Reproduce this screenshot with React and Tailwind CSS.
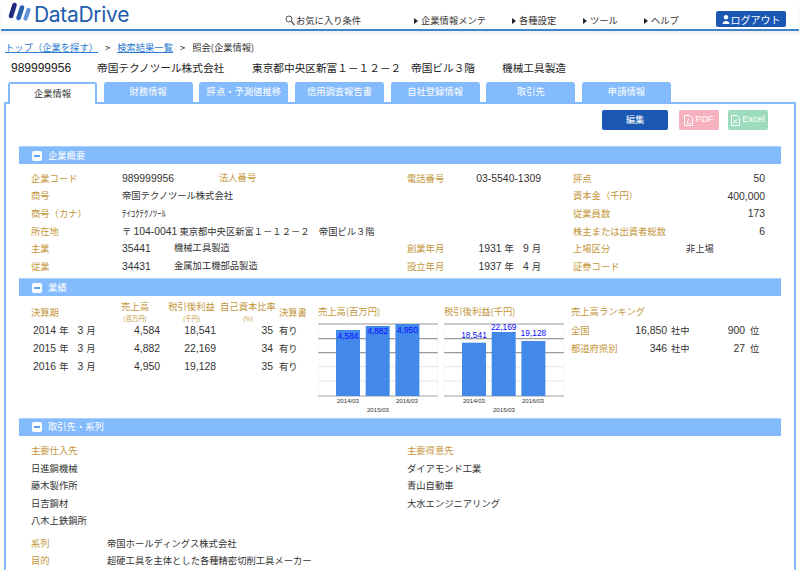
const jp = "font-['Noto_Sans_CJK_JP','Liberation_Sans',sans-serif]";

const tabs = ["企業情報", "財務情報", "評点・予測値推移", "信用調査報告書", "自社登録情報", "取引先", "申請情報"];

function Logo() {
  return (
    <div className="flex items-center h-[28px] pl-[7px]">
      <svg width="24" height="20" viewBox="0 0 24 20" className="mr-[2px] -mt-[5px]">
        <path d="M6.5 3 L3 14" stroke="#1f2a80" strokeWidth="4.6" strokeLinecap="round" />
        <path d="M14 5.5 L10.5 16" stroke="#2b5fb0" strokeWidth="4.6" strokeLinecap="round" />
        <path d="M20.5 8 L17.5 16.5" stroke="#5f94d8" strokeWidth="4.2" strokeLinecap="round" />
      </svg>
      <span className="font-['Inter',sans-serif] font-normal text-[#1d5bab] text-[21px] leading-none -tracking-[0.3px] mt-[1px]">DataDrive</span>
    </div>
  );
}

function NavItem({ label, w }) {
  return (
    <div className={`flex items-center text-[9.3px] text-[#333] ${w}`}>
      <span className="w-0 h-0 border-y-[3px] border-y-transparent border-l-[4px] border-l-[#222] mr-[3px]" />
      {label}
    </div>
  );
}

function Header() {
  return (
    <div className="relative h-[30.5px] mx-[1px] border-b-2 border-[#3d85cc] shadow-[0_3px_3px_#f0f0f0]">
      <Logo />
      <div className="absolute left-[284px] top-[14px] flex items-center text-[9.3px] text-[#333]">
        <svg width="10" height="11" viewBox="0 0 10 11" className="mr-[1px]">
          <circle cx="4" cy="4" r="3" fill="none" stroke="#555" strokeWidth="1" />
          <path d="M6.5 6.5 L9.5 10" stroke="#555" strokeWidth="1.3" />
        </svg>
        お気に入り条件
      </div>
      <div className="absolute left-[413px] top-[14px] flex">
        <NavItem label="企業情報メンテ" w="w-[98px]" />
        <NavItem label="各種設定" w="w-[71px]" />
        <NavItem label="ツール" w="w-[61px]" />
        <NavItem label="ヘルプ" w="w-[50px]" />
      </div>
      <div className="absolute left-[715px] top-[11px] w-[70px] h-[16px] rounded-[2px] bg-[#1a58b4] flex items-center justify-center text-white text-[10px]">
        <svg width="8" height="9" viewBox="0 0 8 9" className="mr-[1px]">
          <circle cx="4" cy="2.3" r="2.2" fill="#fff" />
          <path d="M0.5 9 C0.5 5 7.5 5 7.5 9 Z" fill="#fff" />
        </svg>
        ログアウト
      </div>
    </div>
  );
}

function Tabs() {
  return (
    <div className="flex gap-[6.67px] pl-[8px] h-[20px] relative z-10">
      {tabs.map((t, i) => (
        <div
          key={t}
          className={
            i === 0
              ? "w-[89px] h-[22px] rounded-t-[3px] border-2 border-b-0 border-[#84bbfd] bg-white text-[#333] text-[9.3px] flex items-center justify-center"
              : "w-[89px] h-[20px] rounded-t-[3px] bg-[#84bbfd] text-white text-[9.3px] flex items-center justify-center"
          }
        >
          {t}
        </div>
      ))}
    </div>
  );
}

function SectionBar({ title }) {
  return (
    <div className="h-[18px] bg-[#84bbfd] border-t border-[#a8d0fe] flex items-center pl-[13px] text-white text-[9.3px]">
      <span className="w-[10px] h-[10px] rounded-[2px] bg-white flex items-center justify-center mr-[6px]">
        <span className="w-[6px] h-[2px] bg-[#5d9ff0]" />
      </span>
      {title}
    </div>
  );
}

const L = ({ children, className = "" }) => <span className={`text-[#c3963a] ${className}`}>{children}</span>;
const N = ({ children, className = "" }) => <span className={`font-['Liberation_Sans',sans-serif] text-[10.4px] ${className}`}>{children}</span>;

function YearMonth({ y, m }) {
  return (
    <>
      <N>{y}</N>
      <span className="ml-[3px]">年</span>
      <N className="ml-[9px]">{m}</N>
      <span className="ml-[3px]">月</span>
    </>
  );
}

function Overview() {
  const rows = [
    ["企業コード", <div className="flex"><N className="w-[97px]">989999956</N><L>法人番号</L></div>, "電話番号", <N>03-5540-1309</N>, "評点", <N>50</N>],
    ["商号", "帝国テクノツール株式会社", null, null, "資本金（千円）", <N>400,000</N>],
    ["商号（カナ）", <span className="text-[8.8px]">ﾃｲｺｸﾃｸﾉﾂｰﾙ</span>, null, null, "従業員数", <N>173</N>],
    ["所在地", <>〒 <N>104-0041</N> 東京都中央区新富１－１２－２　帝国ビル３階</>, null, null, "株主または出資者総数", <N>6</N>],
    ["主業", <div className="flex"><N className="w-[52px]">35441</N>機械工具製造</div>, "創業年月", <YearMonth y="1931" m="9" />, "上場区分", <div className="text-left pl-[10px]">非上場</div>],
    ["従業", <div className="flex"><N className="w-[52px]">34431</N>金属加工機部品製造</div>, "設立年月", <YearMonth y="1937" m="4" />, "証券コード", ""],
  ];
  return (
    <div className="pl-[12px] pt-[6px] h-[114px]">
      {rows.map((r, i) => (
        <div key={i} className="h-[17.6px] grid grid-cols-[91px_285px_50px_116px_103px_1fr] items-center pr-[16px] text-[9.3px] text-[#333]">
          <L>{r[0]}</L>
          <div className="whitespace-nowrap">{r[1]}</div>
          <L>{r[2]}</L>
          <div className="w-[84px] text-right whitespace-nowrap">{r[3]}</div>
          <L className="whitespace-nowrap">{r[4]}</L>
          <div className="text-right">{r[5]}</div>
        </div>
      ))}
    </div>
  );
}

function Chart({ title, tops, labelY, values, w }) {
  return (
    <div className={w}>
      <div className="h-[18px] text-[#c3963a] leading-[18px]">{title}</div>
      <svg width="120" height="91" viewBox="0 -1 120 91" className="mt-[3px] font-['Liberation_Sans',sans-serif]">
        {[0, 14.7, 28.7, 42.7, 57].map((y, i) => (
          <line key={y} x1="0" x2="120" y1={y} y2={y} stroke={i < 3 ? "#999" : "#ddd"} strokeWidth={i < 3 ? 1.2 : 0.8} />
        ))}
        {[0, 30, 60, 90, 120].map((x) => (
          <line key={x} x1={x} x2={x} y1="0" y2="72" stroke="#e8e8e8" strokeWidth="0.6" />
        ))}
        <line x1="0" x2="120" y1="72" y2="72" stroke="#888" strokeWidth="0.8" />
        {tops.map((t, i) => (
          <g key={i}>
            <rect x={18 + i * 29.7} y={t} width="24" height={72 - t} fill="#4289ea" />
            <text x={30 + i * 29.7} y={labelY[i]} textAnchor="middle" fontSize="8.4" fill="#0a0aff">{values[i]}</text>
          </g>
        ))}
        <text x="30" y="78.5" textAnchor="middle" fontSize="6.1" fill="#333">2014/03</text>
        <text x="89" y="78.5" textAnchor="middle" fontSize="6.1" fill="#333">2016/03</text>
        <text x="60" y="87.5" textAnchor="middle" fontSize="6.1" fill="#333">2015/03</text>
      </svg>
    </div>
  );
}

function HeadCell({ className, label, unit }) {
  return (
    <div className={className}>
      <div className="leading-[13.5px]">{label}</div>
      <div className="text-[6.4px] leading-[9px]">{unit}</div>
    </div>
  );
}

function Results() {
  const rows = [
    ["2014", "4,584", "18,541", "35"],
    ["2015", "4,882", "22,169", "34"],
    ["2016", "4,950", "19,128", "35"],
  ];
  return (
    <div className="flex h-[121.5px] pl-[12px] pt-[6px] text-[9.3px] text-[#333]">
      <div className="w-[287px] shrink-0">
        <div className="grid grid-cols-[70px_59px_56px_57px_1fr] h-[22px] -mt-[2px] items-start text-[#c3963a] text-center leading-[10px] whitespace-nowrap">
          <div className="text-left pt-[7px]">決算期</div>
          <HeadCell className="ml-[20px] w-[28px]" label="売上高" unit="(百万円)" />
          <HeadCell className="ml-[8px] w-[47px]" label="税引後利益" unit="(千円)" />
          <HeadCell className="ml-[4px] w-[56px]" label="自己資本比率" unit="(%)" />
          <div className="text-left pt-[7px] pl-[6px]">決算書</div>
        </div>
        {rows.map((r) => (
          <div key={r[0]} className="grid grid-cols-[70px_59px_56px_57px_1fr] h-[18px] items-center">
            <div className="pl-[2px] whitespace-nowrap"><YearMonth y={r[0]} m="3" /></div>
            <div className="text-right"><N>{r[1]}</N></div>
            <div className="text-right"><N>{r[2]}</N></div>
            <div className="text-right"><N>{r[3]}</N></div>
            <div className="pl-[6px]">有り</div>
          </div>
        ))}
      </div>
      <Chart w="w-[126px] shrink-0" title="売上高(百万円)" tops={[6, 2, 0]} labelY={[14.7, 10, 8.7]} values={["4,584", "4,882", "4,950"]} />
      <Chart w="w-[127px] shrink-0" title="税引後利益(千円)" tops={[18.7, 8, 17]} labelY={[13.7, 5.7, 12]} values={["18,541", "22,169", "19,128"]} />
      <div className="flex-1">
        <div className="text-[#c3963a] h-[18px] leading-[18px]">売上高ランキング</div>
        <div className="grid grid-cols-[45px_51px_23px_55px_1fr] mt-[1.5px] h-[18px] items-center">
          <L>全国</L><div className="text-right"><N>16,850</N></div><div className="pl-[4px]">社中</div><div className="text-right"><N>900</N></div><div className="pl-[5px]">位</div>
        </div>
        <div className="grid grid-cols-[45px_51px_23px_55px_1fr] h-[18px] items-center">
          <L className="whitespace-nowrap">都道府県別</L><div className="text-right"><N>346</N></div><div className="pl-[4px]">社中</div><div className="text-right"><N>27</N></div><div className="pl-[5px]">位</div>
        </div>
      </div>
    </div>
  );
}

function Partners() {
  const left = ["日進鋼機械", "藤木製作所", "日吉鋼材", "八木上鉄鋼所"];
  const right = ["ダイアモンド工業", "青山自動車", "大水エンジニアリング"];
  return (
    <div className="pl-[12px] pt-[7px] text-[9.3px] text-[#333]">
      <div className="grid grid-cols-[376px_1fr]">
        <div>
          <div className="h-[17.5px] flex items-center"><L>主要仕入先</L></div>
          {left.map((x) => <div key={x} className="h-[17.5px] flex items-center">{x}</div>)}
        </div>
        <div>
          <div className="h-[17.5px] flex items-center"><L>主要得意先</L></div>
          {right.map((x) => <div key={x} className="h-[17.5px] flex items-center">{x}</div>)}
        </div>
      </div>
      <div className="mt-[5px] h-[17.5px] flex items-center"><L className="w-[76px]">系列</L>帝国ホールディングス株式会社</div>
      <div className="h-[17.5px] flex items-center"><L className="w-[76px]">目的</L>超硬工具を主体とした各種精密切削工具メーカー</div>
    </div>
  );
}

function FileIcon({ mark }) {
  return (
    <svg width="9" height="11" viewBox="0 0 9 11" className="mr-[2px]">
      <path d="M0.5 0.5 H6 L8.5 3 V10.5 H0.5 Z" fill="none" stroke="#fff" strokeWidth="1" />
      {mark === "x" ? (
        <path d="M2.5 4.5 L6 8.5 M6 4.5 L2.5 8.5" stroke="#fff" strokeWidth="1" />
      ) : (
        <path d="M4.5 3.5 L3 8.5 H6.5" fill="none" stroke="#fff" strokeWidth="0.9" />
      )}
    </svg>
  );
}

export default function App() {
  return (
    <div className={`w-[800px] h-[570px] overflow-hidden bg-white ${jp}`}>
      <Header />
      <div className="pl-[5px] mt-[11.5px] h-[12px] flex items-center text-[9.3px] text-[#333]">
        <span className="text-[#2a7ad0] underline w-[93px] whitespace-nowrap">トップ（企業を探す）</span>
        <span className="ml-[7px] mr-[7px]">&gt;</span>
        <span className="text-[#2a7ad0] underline">検索結果一覧</span>
        <span className="mx-[7px]">&gt;</span>
        <span>照会(企業情報)</span>
      </div>
      <div className="pl-[11px] mt-[6px] h-[16px] flex items-center text-[10.67px] text-[#222] whitespace-nowrap">
        <span className="w-[86px] font-['Liberation_Sans',sans-serif] text-[12px]">989999956</span>
        <span className="w-[155px]">帝国テクノツール株式会社</span>
        <span className="w-[159px]">東京都中央区新富１－１２－２</span>
        <span className="w-[91px]">帝国ビル３階</span>
        <span>機械工具製造</span>
      </div>
      <div className="mt-[6px]"><Tabs /></div>
      <div className="ml-[4px] w-[792px] h-[468px] border-2 border-b-0 border-[#84bbfd] px-[13px] overflow-hidden">
        <div className="flex justify-end h-[42px] pt-[6px] pr-[13px] text-[9.3px]">
          <div className="w-[66px] h-[20px] bg-[#1a58b4] text-white rounded-[2px] flex items-center justify-center">編集</div>
          <div className="w-[40px] h-[20px] ml-[11px] bg-[#f5b1bd] text-white rounded-[2px] flex items-center justify-center font-['Liberation_Sans',sans-serif]"><FileIcon />PDF</div>
          <div className="w-[40px] h-[20px] ml-[9px] bg-[#9cdcbc] text-white rounded-[2px] flex items-center justify-center font-['Liberation_Sans',sans-serif]"><FileIcon mark="x" />Excel</div>
        </div>
        <SectionBar title="企業概要" />
        <Overview />
        <SectionBar title="業績" />
        <Results />
        <SectionBar title="取引先・系列" />
        <Partners />
      </div>
    </div>
  );
}
